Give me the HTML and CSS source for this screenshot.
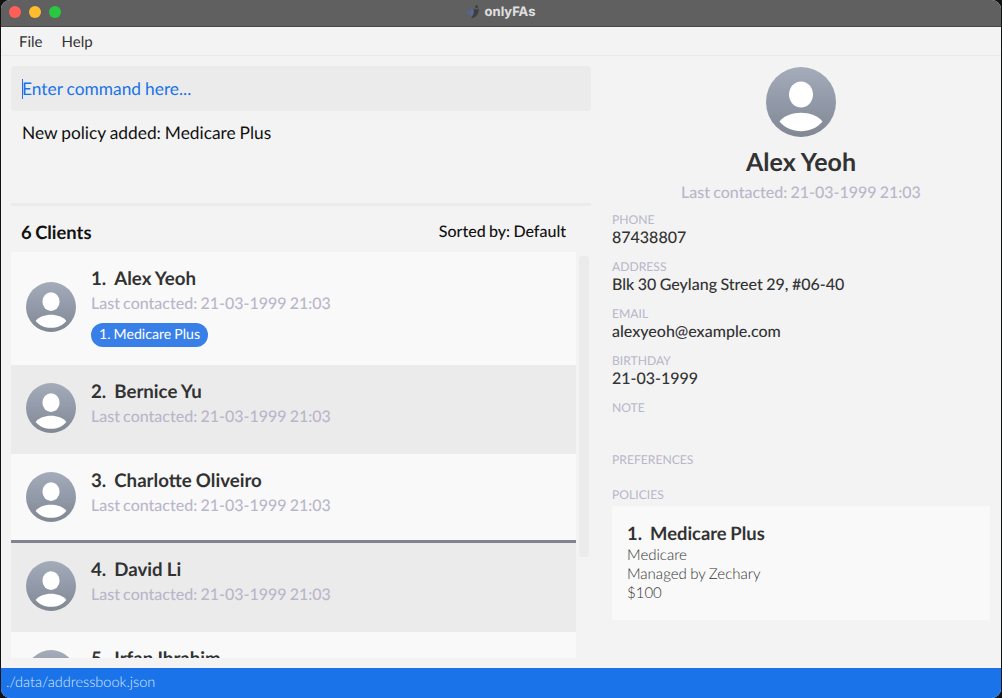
FILE: index.html
```html
<!DOCTYPE html>
<html lang="en">
<head>
<meta charset="utf-8">
<title>onlyFAs</title>
<link rel="stylesheet" href="styles.css">
</head>
<body>
<svg class="defs" width="0" height="0" aria-hidden="true">
  <defs>
    <linearGradient id="shade" x1="0" y1="0" x2="0" y2="1">
      <stop offset="0" stop-color="#a4acba"/>
      <stop offset="0.5" stop-color="#9299a8"/>
      <stop offset="1" stop-color="#818892"/>
    </linearGradient>
    <symbol id="avatar" viewBox="0 0 70 70">
      <circle cx="35" cy="35" r="35" fill="url(#shade)"/>
      <ellipse cx="35" cy="27.5" rx="12" ry="13" fill="#fff"/>
      <path d="M13.5 54.5C22 42.8 48 42.8 56.5 54.5C46 67.4 24 67.4 13.5 54.5Z" fill="#fff"/>
    </symbol>
  </defs>
</svg>
<div class="window">
  <header class="titlebar">
    <div class="lights"><i class="light red"></i><i class="light yellow"></i><i class="light green"></i></div>
    <div class="title">
      <svg class="logo" width="14" height="14" viewBox="0 0 14 14">
        <circle cx="10.500" cy="1.700" r="1.400" fill="#3b3e45"/>
        <path d="M13 3.200C11.700 5 9.700 5 7.700 3.600C8.700 7.500 7.700 10.500 5 13.200C10.300 12.500 12.600 9.500 13 3.200Z" fill="#3b3e45"/>
        <path d="M4.200 3.500L6.800 4C7.600 6.500 7 9 5.400 11L2.800 9.800L4.400 8.600L3.800 6.200L5.400 5.400Z" fill="#526a9b"/>
        <path d="M0 7L2.600 5.800L3.800 7.400L2 9Z" fill="#526a9b"/>
      </svg>
      <span>onlyFAs</span>
    </div>
  </header>
  <nav class="menubar"><span>File</span><span>Help</span></nav>
  <main class="body">
    <section class="left">
      <div class="command"><i class="caret"></i><span>Enter command here...</span></div>
      <div class="result">New policy added: Medicare Plus</div>
      <div class="list-head"><span class="count">6 Clients</span><span class="sort">Sorted by: Default</span></div>
      <div class="list-area">
        <div class="list">
          <article class="row tall">
            <svg class="avatar"><use href="#avatar"/></svg>
            <div class="info">
              <div class="name"><span>1.</span><span>Alex Yeoh</span></div>
              <div class="last">Last contacted: 21-03-1999 21:03</div>
              <div class="tag">1. Medicare Plus</div>
            </div>
          </article>
          <article class="row alt">
            <svg class="avatar"><use href="#avatar"/></svg>
            <div class="info">
              <div class="name"><span>2.</span><span>Bernice Yu</span></div>
              <div class="last">Last contacted: 21-03-1999 21:03</div>
            </div>
          </article>
          <article class="row marked">
            <svg class="avatar"><use href="#avatar"/></svg>
            <div class="info">
              <div class="name"><span>3.</span><span>Charlotte Oliveiro</span></div>
              <div class="last">Last contacted: 21-03-1999 21:03</div>
            </div>
          </article>
          <article class="row alt">
            <svg class="avatar"><use href="#avatar"/></svg>
            <div class="info">
              <div class="name"><span>4.</span><span>David Li</span></div>
              <div class="last">Last contacted: 21-03-1999 21:03</div>
            </div>
          </article>
          <article class="row">
            <svg class="avatar"><use href="#avatar"/></svg>
            <div class="info">
              <div class="name"><span>5.</span><span>Irfan Ibrahim</span></div>
            </div>
          </article>
        </div>
        <div class="thumb"></div>
      </div>
    </section>
    <section class="detail">
      <svg class="portrait"><use href="#avatar"/></svg>
      <h1>Alex Yeoh</h1>
      <div class="last centered">Last contacted: 21-03-1999 21:03</div>
      <dl>
        <div class="field"><dt>PHONE</dt><dd>87438807</dd></div>
        <div class="field"><dt>ADDRESS</dt><dd>Blk 30 Geylang Street 29, #06-40</dd></div>
        <div class="field"><dt>EMAIL</dt><dd>alexyeoh@example.com</dd></div>
        <div class="field"><dt>BIRTHDAY</dt><dd>21-03-1999</dd></div>
        <div class="field note"><dt>NOTE</dt></div>
        <div class="field prefs"><dt>PREFERENCES</dt></div>
        <div class="field policies"><dt>POLICIES</dt></div>
      </dl>
      <div class="policy">
        <div class="name"><span>1.</span><span>Medicare Plus</span></div>
        <p>Medicare</p>
        <p>Managed by Zechary</p>
        <p>$100</p>
      </div>
    </section>
  </main>
  <footer class="status">./data/addressbook.json</footer>
</div>
</body>
</html>
```
FILE: styles.css
```css
* { box-sizing: border-box; margin: 0; padding: 0; }
body {
  width: 1002px; height: 698px; overflow: hidden;
  padding: 0 1px; background: #101214;
  font-family: Lato, sans-serif; color: #323232;
  text-rendering: geometricPrecision;
}
.defs { display: block; }
.window {
  height: 698px; display: flex; flex-direction: column; overflow: hidden;
  background: #f3f3f3; border-radius: 9px;
}
.titlebar {
  height: 27px; flex: none; display: grid; grid-template-columns: 1fr auto 1fr;
  background: #606060; border-bottom: 1px solid #484848;
}
.lights { display: flex; gap: 8px; padding: 6px 0 0 8px; }
.light { width: 12px; height: 12px; border-radius: 50%; }
.red { background: #ff5f57; }
.yellow { background: #febc2e; }
.green { background: #28c840; }
.title {
  display: flex; gap: 5px; align-items: center; height: 24px;
  font: 700 13px/24px Inter, sans-serif; color: #e0e0e0;
}
.logo { margin-left: -1px; }
.menubar {
  height: 29px; flex: none; display: flex; gap: 19px; padding: 1px 0 0 18px;
  font-size: 15px; line-height: 28px; border-bottom: 1px solid #eaeaea;
}
.body { flex: 1; min-height: 0; display: flex; padding: 10px 11px 10px 10px; gap: 21px; }
.left { width: 580px; display: flex; flex-direction: column; }
.command {
  height: 45px; flex: none; display: flex; align-items: center; padding: 0 11px;
  background: #ebebeb; border-radius: 4px; color: #1a73e8;
  font-size: 17.33px; word-spacing: -0.4px;
}
.caret { width: 1px; height: 20px; margin-right: -1px; background: #1a73e8; }
.result {
  height: 95px; flex: none; padding: 11px 11px 0; line-height: 21px;
  font-size: 17.33px; word-spacing: -0.5px; color: #111; border-bottom: 3px solid #ebebeb;
}
.list-head {
  height: 46px; flex: none; display: flex; justify-content: space-between;
  padding: 0 25px 0 10px; line-height: 53px; color: #111;
}
.count { font-size: 18.4px; font-weight: 700; word-spacing: -1px; }
.sort { font-size: 16px; line-height: 51px; font-weight: 500; word-spacing: -0.7px; }
.list-area { flex: 1; min-height: 0; display: flex; gap: 3px; }
.list { width: 565px; overflow: hidden; }
.row {
  height: 89px; display: flex; align-items: center; gap: 15px; padding: 0 15px;
  background: #f9f9f9; border-bottom: 3px solid #f9f9f9;
}
.tall { height: 113px; }
.alt { background: #ebebeb; border-color: #ebebeb; }
.marked { border-color: #82858d; }
.avatar { width: 50px; height: 50px; flex: none; }
.info { align-self: stretch; padding-top: 14px; }
.name {
  display: flex; gap: 8px; font-size: 18.67px; line-height: 24px;
  font-weight: 700; word-spacing: -0.4px; color: #323232;
}
.info .name { margin-bottom: 2px; }
.last { font-size: 16px; line-height: 24px; font-weight: 500; word-spacing: -0.9px; color: #b9b6ca; }
.tag {
  width: fit-content; margin-top: 7px; padding: 0 8px 1px; line-height: 23px;
  font-size: 14.1px; word-spacing: -0.5px; color: #fff; background: #3880e8; border-radius: 12px;
}
.thumb { width: 10px; height: 301px; margin-top: 4px; background: #ebebeb; border-radius: 3px; }
.detail { width: 378px; display: flex; flex-direction: column; }
.portrait { width: 70px; height: 70px; margin: 1px auto 0; flex: none; }
h1 { margin-top: 10px; font-size: 25px; line-height: 30px; text-align: center; font-weight: 700; }
.centered { margin-top: 4px; text-align: center; }
dl { margin-top: 7px; }
.field { height: 47px; }
dt { font-size: 12.15px; line-height: 15px; color: #b9b6ca; }
dd { margin-top: 1px; font-size: 16px; line-height: 20px; font-weight: 500; word-spacing: -0.6px; color: #323232; }
.note { height: 52px; }
.prefs { height: 35px; }
.policies { height: 19px; }
.policy { height: 114px; padding: 15px 15px 0; background: #f9f9f9; }
.policy .name { font-size: 18.4px; margin-bottom: 1px; word-spacing: -0.8px; }
.policy p { font-size: 15px; line-height: 19px; font-weight: 300; word-spacing: -0.7px; }
.status {
  height: 30px; flex: none; padding-left: 5px; line-height: 30px;
  background: #1a73e8; color: #d9e7fb; font-size: 14.5px; font-weight: 300;
}
```
